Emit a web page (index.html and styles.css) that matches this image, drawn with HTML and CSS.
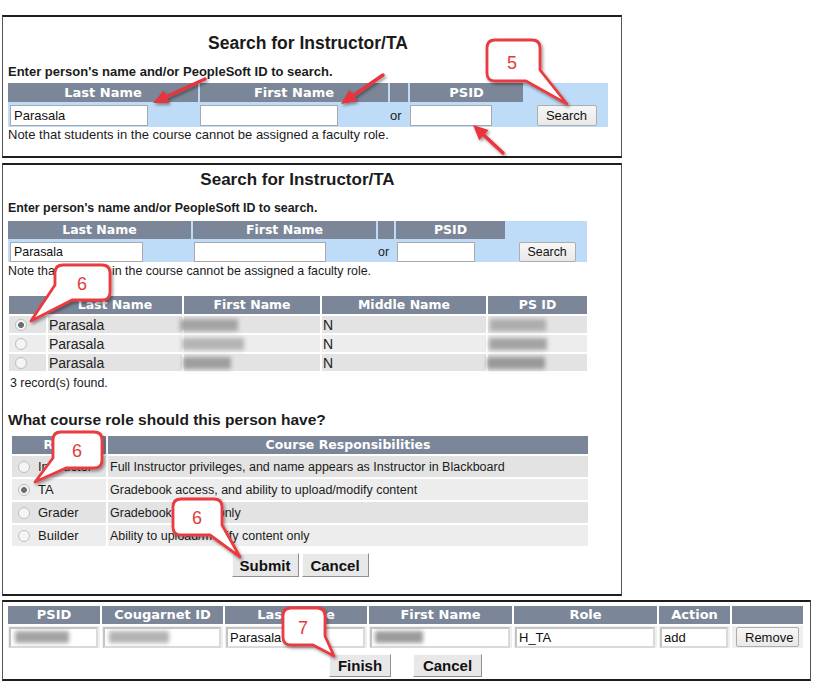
FILE: index.html
```html
<!DOCTYPE html>
<html lang="en">
<head>
  <meta charset="UTF-8">
  <title>Add Instructor/TA</title>
  <link rel="stylesheet" href="styles.css">
</head>
<body>
  <!-- step 5: search -->
  <div class="panel p1">
    <h2 class="title">Search for Instructor/TA</h2>
    <div class="hint">Enter person's name and/or PeopleSoft ID to search.</div>
    <div class="search">
      <div class="th">Last Name</div>
      <div class="th">First Name</div>
      <div class="th"></div>
      <div class="th">PSID</div>
      <div></div>
      <div class="td"><input class="txt last" type="text" value="Parasala"></div>
      <div class="td"><input class="txt first" type="text" value=""></div>
      <div class="td">or</div>
      <div class="td"><input class="txt psid" type="text" value=""></div>
      <div class="td mid"><button class="btn">Search</button></div>
    </div>
    <div class="note">Note that students in the course cannot be assigned a faculty role.</div>
  </div>

  <!-- step 6: pick person + role -->
  <div class="panel p2">
    <h2 class="title">Search for Instructor/TA</h2>
    <div class="hint">Enter person's name and/or PeopleSoft ID to search.</div>
    <div class="search">
      <div class="th">Last Name</div>
      <div class="th">First Name</div>
      <div class="th"></div>
      <div class="th">PSID</div>
      <div></div>
      <div class="td"><input class="txt last" type="text" value="Parasala"></div>
      <div class="td"><input class="txt first" type="text" value=""></div>
      <div class="td">or</div>
      <div class="td"><input class="txt psid" type="text" value=""></div>
      <div class="td mid"><button class="btn">Search</button></div>
    </div>
    <div class="note">Note that students in the course cannot be assigned a faculty role.</div>

    <div class="results">
      <div class="th"></div>
      <div class="th">Last Name</div>
      <div class="th">First Name</div>
      <div class="th">Middle Name</div>
      <div class="th">PS ID</div>

      <div class="cell r1"><span class="radio on"></span></div>
      <div class="cell r1 name">Parasala</div>
      <div class="cell r1"><span class="blur fn1"></span></div>
      <div class="cell r1 name">N</div>
      <div class="cell r1"><span class="blur id1"></span></div>

      <div class="cell r2"><span class="radio"></span></div>
      <div class="cell r2 name">Parasala</div>
      <div class="cell r2"><span class="blur fn2"></span></div>
      <div class="cell r2 name">N</div>
      <div class="cell r2"><span class="blur id2"></span></div>

      <div class="cell r1"><span class="radio"></span></div>
      <div class="cell r1 name">Parasala</div>
      <div class="cell r1"><span class="blur fn3"></span></div>
      <div class="cell r1 name">N</div>
      <div class="cell r1"><span class="blur id3"></span></div>
    </div>
    <div class="count">3 record(s) found.</div>

    <div class="question">What course role should this person have?</div>
    <div class="roles">
      <div class="th">Role</div>
      <div class="th">Course Responsibilities</div>

      <div class="cell r1 role"><span class="radio"></span><span class="rname">Instructor</span></div>
      <div class="cell r1 desc">Full Instructor privileges, and name appears as Instructor in Blackboard</div>
      <div class="cell r2 role"><span class="radio on"></span><span class="rname">TA</span></div>
      <div class="cell r2 desc">Gradebook access, and ability to upload/modify content</div>
      <div class="cell r1 role"><span class="radio"></span><span class="rname">Grader</span></div>
      <div class="cell r1 desc">Gradebook access only</div>
      <div class="cell r2 role"><span class="radio"></span><span class="rname">Builder</span></div>
      <div class="cell r2 desc">Ability to upload/modify content only</div>
    </div>
    <div class="actions">
      <button class="big w67">Submit</button>
      <button class="big w67">Cancel</button>
    </div>
  </div>

  <!-- step 7: confirm -->
  <div class="panel p3">
    <div class="staff">
      <div class="th">PSID</div>
      <div class="th">Cougarnet ID</div>
      <div class="th">Last Name</div>
      <div class="th">First Name</div>
      <div class="th">Role</div>
      <div class="th">Action</div>
      <div class="th"></div>

      <div class="scell"><div class="field"><span class="blur v1"></span></div></div>
      <div class="scell"><div class="field"><span class="blur v2"></span></div></div>
      <div class="scell"><input class="field" type="text" value="Parasala"></div>
      <div class="scell"><div class="field"><span class="blur v3"></span></div></div>
      <div class="scell"><input class="field" type="text" value="H_TA"></div>
      <div class="scell"><input class="field" type="text" value="add"></div>
      <div class="scell mid"><button class="btn remove">Remove</button></div>
    </div>
    <div class="actions wide">
      <button class="big w62">Finish</button>
      <button class="big w69">Cancel</button>
    </div>
  </div>

  <!-- annotation layer -->
  <svg class="notes" width="821" height="697" viewBox="0 0 821 697">
    <defs>
      <filter id="sh" x="-30%" y="-30%" width="160%" height="160%">
        <feDropShadow dx="1.5" dy="2" stdDeviation="1.6" flood-color="#000" flood-opacity="0.4"/>
      </filter>
    </defs>

    <g class="arrow" filter="url(#sh)">
      <line x1="205" y1="79" x2="166.6" y2="96.7"/>
      <polygon points="153,103 163.7,90.3 169.5,103.1"/>
      <line x1="383" y1="75" x2="353.3" y2="95.5"/>
      <polygon points="341,104 349.4,89.7 357.3,101.3"/>
      <line x1="503" y1="153" x2="484" y2="135.2"/>
      <polygon points="473,125 488.7,130.1 479.2,140.3"/>
    </g>

    <g class="callout" filter="url(#sh)">
      <path d="M495,40 H532 Q540,40 540,48 V70 L567,104 L526,81 H495 Q487,81 487,73 V48 Q487,40 495,40 Z"/>
      <path d="M63,265 H102 Q110,265 110,273 V292 Q110,300 102,300 H72 L31,321 L55,285 V273 Q55,265 63,265 Z"/>
      <path d="M61,432 H94 Q102,432 102,440 V460 Q102,468 94,468 H66 L35,482 L53,458 V440 Q53,432 61,432 Z"/>
      <path d="M181,499 H214 Q222,499 222,507 V525 L240,557 L210,535 H181 Q173,535 173,527 V507 Q173,499 181,499 Z"/>
      <path d="M291,608 H317 Q325,608 325,616 V636 L334,656 L313,645 H291 Q283,645 283,637 V616 Q283,608 291,608 Z"/>
    </g>
    <g class="num">
      <text x="512" y="68.5">5</text>
      <text x="82" y="289.5">6</text>
      <text x="77" y="456.5">6</text>
      <text x="197" y="523.5">6</text>
      <text x="303" y="633.5">7</text>
    </g>
  </svg>
</body>
</html>
```

FILE: styles.css
```css
body {
  margin: 0;
  font-family: "Liberation Sans", Arial, sans-serif;
  color: #1b1b1b;
  background: #fff;
}
.panel {
  margin-left: 2px;
  box-sizing: border-box;
  border: 1px solid #555;
  border-top: 2px solid #1e1e1e;
  border-bottom: 2px solid #1e1e1e;
}
.p1 {
  width: 620px;
  margin-top: 15px;
  padding: 16px 0 14px 5px;
}
.p2 {
  width: 620px;
  margin-top: 5px;
  padding: 5px 0 17px 5px;
}
.p3 {
  width: 809px;
  margin-top: 4px;
  padding: 4px 0 2px 5px;
}

/* headings */
.title {
  margin: 0;
  text-align: center;
  font-size: 17.5px;
  line-height: 20px;
}
.p1 .title { width: 600px; }
.p2 .title { width: 579px; font-size: 17px; }
.hint {
  font-weight: bold;
  font-size: 13px;
  line-height: 15px;
  margin-top: 11px;
}
.p2 .hint { font-size: 12.4px; line-height: 14px; }
.note {
  font-size: 13px;
  line-height: 15px;
}
.p2 .note { font-size: 12.4px; line-height: 14px; margin-top: 2px; }

/* header cells */
.th {
  background: #7b8698;
  color: #fff;
  font-family: "DejaVu Sans", Verdana, sans-serif;
  font-weight: bold;
  font-size: 13px;
  line-height: 19px;
  text-align: center;
  white-space: nowrap;
  overflow: hidden;
}

/* search strip */
.search {
  display: grid;
  gap: 2px;
  background: #bedcf7;
}
.p1 .search {
  width: 600px;
  margin-top: 4px;
  grid-template-columns: 190px 188px 18px 113px 1fr;
  grid-template-rows: 19px 23px;
}
.p2 .search {
  width: 579px;
  margin-top: 6px;
  grid-template-columns: 183px 183px 16px 109px 1fr;
  grid-template-rows: 18px 21px;
}
.p2 .search .th { font-size: 12.5px; line-height: 18px; }
.td {
  display: flex;
  align-items: center;
  font-size: 13px;
}
.p2 .td { font-size: 12.4px; }
.mid { justify-content: center; }

.txt {
  box-sizing: border-box;
  height: 21px;
  padding: 0 3px;
  border: 1px solid #a9a9a9;
  background: #fff;
  font-family: "Liberation Sans", Arial, sans-serif;
  font-size: 13px;
  color: #111;
  outline: none;
}
.p1 .last { width: 138px; margin-left: 2px; }
.p1 .first { width: 138px; }
.p1 .psid { width: 82px; }
.p2 .txt { height: 20px; font-size: 12.4px; }
.p2 .last { width: 133px; margin-left: 2px; }
.p2 .first { width: 132px; margin-left: 1px; }
.p2 .psid { width: 78px; margin-left: 1px; }

.btn {
  height: 21px;
  padding: 0 8px;
  border: 1px solid #adadad;
  border-radius: 2px;
  background: linear-gradient(#f6f6f6, #e9e9e9);
  font-family: "Liberation Sans", Arial, sans-serif;
  font-size: 13px;
  color: #111;
}
.p1 .btn { width: 60px; }
.p2 .btn { width: 57px; height: 20px; font-size: 12.4px; }

/* results grid */
.results {
  display: grid;
  width: 578px;
  margin: 18px 0 0 1px;
  gap: 2px;
  grid-template-columns: 37px 134px 136px 164px 1fr;
  grid-template-rows: 18px 17px 17px 17px;
}
.results .th,
.roles .th { font-size: 12.5px; line-height: 18px; }
.cell {
  display: flex;
  align-items: center;
  font-size: 13px;
  white-space: nowrap;
}
.r1 { background: #e3e3e3; }
.r2 { background: #ededed; }
.name { font-size: 14px; padding-left: 1px; color: #222; }

.radio {
  display: inline-block;
  flex: none;
  box-sizing: border-box;
  width: 12px;
  height: 12px;
  margin-left: 6px;
  border: 1px solid #bdbdbd;
  border-radius: 50%;
  background: #f5f5f5;
}
.radio.on { background: radial-gradient(circle, #6d6d6d 0 2.6px, #f5f5f5 3.2px); }

.blur {
  display: inline-block;
  height: 12px;
  background: #a3a3a3;
  filter: blur(2px);
}
.fn1 { width: 58px; margin-left: -4px; }
.fn2 { width: 62px; margin-left: -2px; background: #b4b4b4; }
.fn3 { width: 48px; margin-left: -1px; background: #9e9e9e; }
.id1 { width: 56px; margin-left: 2px; background: #adadad; }
.id2 { width: 58px; margin-left: 1px; }
.id3 { width: 58px; margin-left: -1px; background: #999; }

.count {
  margin: 5px 0 0 2px;
  font-size: 12.4px;
  line-height: 14px;
}
.question {
  margin-top: 21px;
  font-weight: bold;
  font-size: 15.5px;
  line-height: 18px;
}

/* roles grid */
.roles {
  display: grid;
  width: 576px;
  margin: 7px 0 0 4px;
  gap: 2px;
  grid-template-columns: 94px 1fr;
  grid-template-rows: 18px repeat(4, 21px);
}
.rname { margin-left: 8px; font-size: 13px; }
.desc { padding-left: 2px; font-size: 12.5px; }

.actions {
  display: flex;
  justify-content: center;
  gap: 3px;
  width: 576px;
  margin: 7px 0 0 4px;
}
.actions.wide {
  width: 795px;
  gap: 22px;
  margin: 6px 0 0 0;
}
.big {
  height: 24px;
  padding: 0;
  border: 1px solid;
  border-color: #fcfcfc #8f8f8f #8f8f8f #fcfcfc;
  background: #e8e8e8;
  font-family: "Liberation Sans", Arial, sans-serif;
  font-weight: bold;
  font-size: 15px;
  color: #111;
}
.wide .big { height: 23px; }
.w67 { width: 67px; }
.w62 { width: 62px; }
.w69 { width: 69px; }

/* staff grid */
.staff {
  display: grid;
  width: 795px;
  gap: 2px;
  grid-template-columns: 92px 121px 142px 143px 143px 71px 71px;
  grid-template-rows: 18px 22px;
}
.staff .th { font-size: 13px; line-height: 18px; }
.scell {
  display: flex;
  align-items: center;
  background: #efefef;
}
.field {
  box-sizing: border-box;
  display: flex;
  align-items: center;
  width: calc(100% - 3px);
  height: 21px;
  margin-left: 1px;
  padding: 0 2px;
  border: 2px solid;
  border-color: #c4c4c4 #dadada #dadada #c4c4c4;
  background: #fff;
  font-family: "Liberation Sans", Arial, sans-serif;
  font-size: 13px;
  color: #111;
  outline: none;
}
.v1 { width: 54px; margin-left: 2px; }
.v2 { width: 60px; margin-left: 2px; background: #b3b3b3; }
.v3 { width: 48px; margin-left: 1px; background: #9b9b9b; }
.remove { width: 63px; height: 20px; }

/* annotations */
.notes {
  position: absolute;
  top: 0;
  left: 0;
  pointer-events: none;
}
.arrow line {
  stroke: #e8363d;
  stroke-width: 3.5;
  stroke-linecap: round;
}
.arrow polygon { fill: #e8363d; }
.callout path {
  fill: #fff;
  stroke: #ea3a40;
  stroke-width: 2.8;
  stroke-linejoin: round;
}
.num text {
  font-family: "Liberation Sans", Arial, sans-serif;
  font-size: 18px;
  fill: #e23b3b;
  text-anchor: middle;
}
```
